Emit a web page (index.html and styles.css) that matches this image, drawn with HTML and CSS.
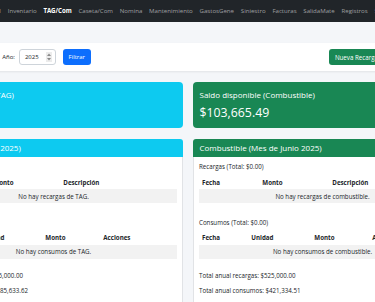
FILE: index.html
```html
<!DOCTYPE html>
<html lang="es">
<head>
<meta charset="utf-8">
<title>TAG/Com</title>
<link rel="stylesheet" href="styles.css">
</head>
<body>
<div class="app">
  <nav class="navbar">
    <div class="nav-group nav-start">
      <a class="nav-link">Inicio</a>
      <a class="nav-link">Personal</a>
    </div>
    <div class="nav-group">
      <a class="nav-link">Inventario</a>
      <a class="nav-link active">TAG/Com</a>
      <a class="nav-link">Caseta/Com</a>
      <a class="nav-link">Nomina</a>
      <a class="nav-link">Mantenimiento</a>
      <a class="nav-link">GastosGene</a>
      <a class="nav-link">Siniestro</a>
      <a class="nav-link">Facturas</a>
      <a class="nav-link">SalidaMate</a>
      <a class="nav-link">Registros</a>
      <a class="nav-link">Salir</a>
    </div>
  </nav>
  <div class="subbar"></div>
  <div class="filter-bar">
    <div class="filter-inner">
      <span class="flabel">Mes:</span>
      <span class="fcontrol fselect">Junio</span>
      <span class="flabel">Año:</span>
      <span class="fcontrol fyear">2025
        <svg class="spin" width="6" height="10" viewBox="0 0 6 10"><rect x="0" y="0" width="6" height="10" fill="#ececec"/><path d="M1 4 L3 1.5 L5 4 Z M1 6 L3 8.5 L5 6 Z" fill="#8a8a8a"/></svg>
      </span>
      <span class="btn btn-primary">Filtrar</span>
      <span class="btn btn-success push">Nueva Recarga</span>
    </div>
  </div>
  <main class="content">
    <div class="grid">
      <div class="stat stat-info">
        <div class="stat-label">Saldo disponible (TAG)</div>
        <div class="stat-value">$4,366.38</div>
      </div>
      <div class="stat stat-success">
        <div class="stat-label">Saldo disponible (Combustible)</div>
        <div class="stat-value">$103,665.49</div>
      </div>

      <section class="panel">
        <div class="panel-head head-info">TAG (Mes de Junio 2025)</div>
        <div class="panel-body">
          <p class="sub">Recargas (Total: $0.00)</p>
          <table class="tbl tbl-3">
            <colgroup><col class="c1"><col class="c2"><col></colgroup>
            <thead><tr><th>Fecha</th><th>Monto</th><th>Descripción</th></tr></thead>
            <tbody><tr class="empty"><td colspan="3">No hay recargas de TAG.</td></tr></tbody>
          </table>
          <p class="sub">Consumos (Total: $0.00)</p>
          <table class="tbl tbl-4">
            <colgroup><col class="d1"><col class="d2"><col class="d3"><col></colgroup>
            <thead><tr><th>Fecha</th><th>Unidad</th><th>Monto</th><th>Acciones</th></tr></thead>
            <tbody><tr class="empty"><td colspan="4">No hay consumos de TAG.</td></tr></tbody>
          </table>
          <p class="total">Total anual recargas: $15,000.00</p>
          <p class="total">Total anual consumos: $85,633.62</p>
        </div>
      </section>

      <section class="panel">
        <div class="panel-head head-success">Combustible (Mes de Junio 2025)</div>
        <div class="panel-body">
          <p class="sub">Recargas (Total: $0.00)</p>
          <table class="tbl tbl-3">
            <colgroup><col class="c1"><col class="c2"><col></colgroup>
            <thead><tr><th>Fecha</th><th>Monto</th><th>Descripción</th></tr></thead>
            <tbody><tr class="empty"><td colspan="3">No hay recargas de combustible.</td></tr></tbody>
          </table>
          <p class="sub">Consumos (Total: $0.00)</p>
          <table class="tbl tbl-4">
            <colgroup><col class="d1"><col class="d2"><col class="d3"><col></colgroup>
            <thead><tr><th>Fecha</th><th>Unidad</th><th>Monto</th><th>Acciones</th></tr></thead>
            <tbody><tr class="empty"><td colspan="4">No hay consumos de combustible.</td></tr></tbody>
          </table>
          <p class="total">Total anual recargas: $525,000.00</p>
          <p class="total">Total anual consumos: $421,334.51</p>
        </div>
      </section>
    </div>
  </main>
</div>
</body>
</html>
```

FILE: styles.css
```css
* { box-sizing: border-box; margin: 0; padding: 0; }
html, body { width: 375px; height: 302px; overflow: hidden; }
body {
  background: #f4f6f9;
  font-family: "Open Sans", "Noto Sans", sans-serif;
  color: #212529;
}

/* page scrolled horizontally: wrapper starts left of the viewport */
.app { width: 544px; margin-left: -84px; }

.navbar {
  background: #212529;
  height: 22px;
  display: grid;
  grid-template-columns: 88.3px auto;
  align-items: center;
  overflow: hidden;
}
.nav-group { display: flex; white-space: nowrap; }
.nav-start { justify-content: flex-end; }
.nav-link {
  font-size: 6.1px;
  line-height: 22px;
  padding: 0 3.4px;
  color: rgba(255, 255, 255, 0.55);
}
.nav-link.active { color: #fff; font-weight: 700; }

.subbar { height: 21px; }

.filter-bar {
  background: #fff;
  height: 28px;
  box-shadow: 0 1px 2px rgba(0, 0, 0, 0.08);
  display: flex;
  align-items: center;
}
.filter-inner {
  width: 460px;
  margin-left: 8px;
  display: flex;
  align-items: center;
  font-size: 6px;
}
.flabel { margin-right: 4px; }
.fcontrol {
  height: 16px;
  border: 1px solid #ced4da;
  border-radius: 3px;
  display: flex;
  align-items: center;
  padding: 0 5px;
  background: #fff;
}
.fselect { width: 58px; margin-right: 3px; }
.fyear { width: 37px; justify-content: space-between; padding-right: 3px; margin-right: 7px; }
.spin { display: block; }
.btn {
  height: 16px;
  border-radius: 3px;
  color: #fff;
  display: flex;
  align-items: center;
  white-space: nowrap;
}
.btn-primary { background: #0d6efd; padding: 0 5.7px; }
.btn-success { background: #198754; padding: 0 6px; font-size: 6.2px; }
.push { margin-left: auto; }

.content { padding: 11px 8px 0; }
.grid {
  display: grid;
  grid-template-columns: 259px 259px;
  column-gap: 10px;
  row-gap: 11px;
}

.stat {
  height: 46px;
  border-radius: 4px;
  color: #fff;
  padding: 7.3px 6.5px 0;
}
.stat-info { background: #0dcaf0; }
.stat-success { background: #198754; }
.stat-label { font-size: 8px; line-height: 11px; }
.stat-value { font-size: 12.3px; line-height: 16px; margin-top: 4.7px; font-weight: 500; }

.panel { border-radius: 3px; }
.panel-head {
  height: 18px;
  line-height: 18px;
  font-size: 8px;
  color: #fff;
  padding: 0 6.5px;
  border-radius: 3px 3px 0 0;
  white-space: nowrap;
}
.head-info { background: #0dcaf0; }
.head-success { background: #198754; }
.panel-body {
  background: #fff;
  border: 1px solid #e1e3e6;
  border-top: 0;
  padding: 5px 5px 20px;
  font-size: 6.2px;
}
.sub { line-height: 9px; margin-bottom: 4px; white-space: nowrap; }
.tbl {
  width: 100%;
  border-collapse: collapse;
  table-layout: fixed;
  margin-bottom: 14.5px;
}
.tbl th {
  text-align: left;
  font-weight: 700;
  height: 14px;
  line-height: 9px;
  padding: 2.5px 3px;
  white-space: nowrap;
}
.tbl td {
  height: 14px;
  line-height: 9px;
  padding: 2.5px 3px;
  text-align: center;
  white-space: nowrap;
}
.empty td { background: #f2f2f2; }
.tbl-4 { margin-bottom: 12px; }
.c1 { width: 60.3px; }
.c2 { width: 70px; }
.d1 { width: 49.3px; }
.d2 { width: 63px; }
.d3 { width: 58px; }
.total { line-height: 9px; margin-bottom: 6px; white-space: nowrap; }
```
